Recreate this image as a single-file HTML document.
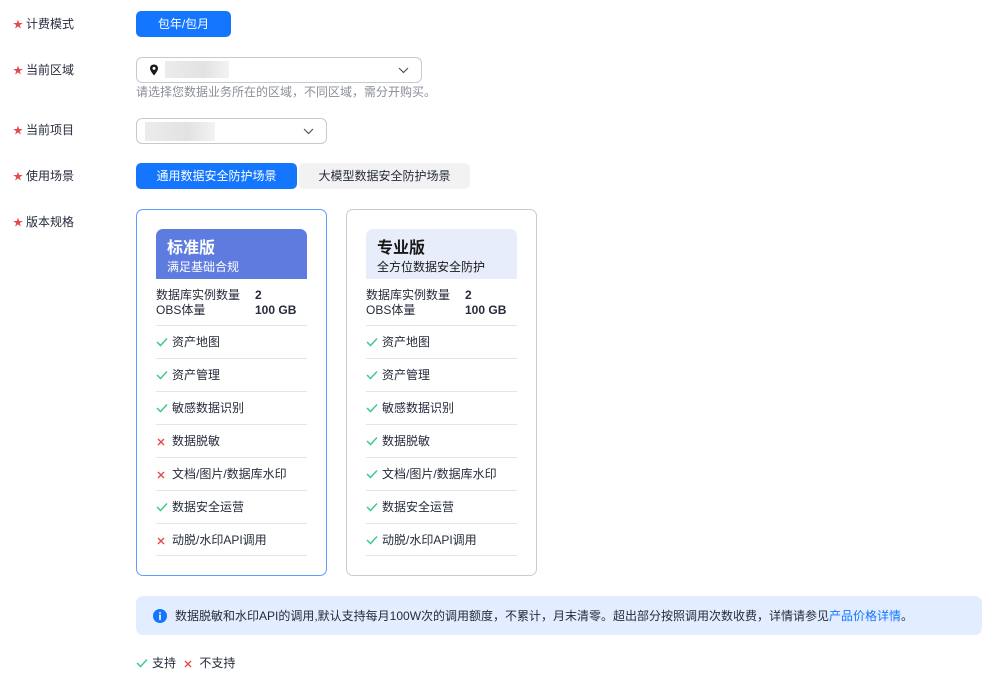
<!DOCTYPE html>
<html><head><meta charset="utf-8"><style>
*{box-sizing:border-box;margin:0;padding:0}
body{width:999px;height:673px;background:#fff;font-family:"Liberation Sans","Noto Sans CJK SC",sans-serif;font-size:12px;color:#252b3a;position:relative;overflow:hidden}
.a{position:absolute}
.lbl{left:13px;line-height:16px}
.lbl b{color:#e5484d;font-weight:normal;margin-right:3px;font-size:10px}
.btn{border-radius:5px;text-align:center;line-height:26px;height:26px}
.sel{border:1px solid #c7c9ce;border-radius:6px;height:26px;background:#fff}
.blur{background:linear-gradient(90deg,#ececec,#e2e2e2 60%,#f3f3f3);height:17px}
.card{border:1px solid #c9cbd0;border-radius:7px;width:191px;height:367px;top:209px}
.hd{left:19px;top:19px;width:151px;height:50px;border-radius:7px 7px 0 0;padding:10px 0 0 11px}
.hd .t{font-size:16px;font-weight:bold;line-height:20px}
.hd .s{font-size:12px;line-height:16px}
.spec{left:19px;top:78px;width:151px;line-height:15px}
.spec span{display:inline-block;width:99px}
.spec i{font-style:normal;font-weight:bold}
.row{left:19px;width:151px;height:33px;border-top:1px solid #e4e5e8;line-height:32px}
.row.last{border-bottom:1px solid #e4e5e8}
.ck{display:inline-block;width:16px;height:10px;vertical-align:-1px;background:no-repeat}
.ck svg,.x svg{display:block}
.x{display:inline-block;width:16px;vertical-align:-1px;padding-left:1px}
</style></head><body>
<svg width="0" height="0" style="position:absolute"><defs>
<symbol id="c" viewBox="0 0 12 10"><path d="M1 5l3.5 3.5L11 1.5" fill="none" stroke="#3dcc8e" stroke-width="1.5"/></symbol>
<symbol id="xx" viewBox="0 0 8 8"><path d="M1 1l6 6M7 1L1 7" stroke="#e5484d" stroke-width="1.4"/></symbol>
</defs></svg>
<div class="a lbl" style="top:16px"><b>★</b>计费模式</div>
<div class="a lbl" style="top:62px"><b>★</b>当前区域</div>
<div class="a lbl" style="top:122px"><b>★</b>当前项目</div>
<div class="a lbl" style="top:168px"><b>★</b>使用场景</div>
<div class="a lbl" style="top:214px"><b>★</b>版本规格</div>

<div class="a btn" style="left:136px;top:11px;width:95px;background:#1476ff;color:#fff">包年/包月</div>

<div class="a sel" style="left:136px;top:57px;width:286px">
 <svg class="a" style="left:12px;top:6px" width="10" height="13" viewBox="0 0 10 13"><path d="M5 0.5C2.5 0.5 1 2.3 1 4.4 1 7 5 11.5 5 11.5S9 7 9 4.4C9 2.3 7.5 0.5 5 0.5Z" fill="#191919"/><circle cx="5" cy="4.4" r="1.5" fill="#fff"/></svg>
 <div class="a blur" style="left:28px;top:3px;width:64px"></div>
 <svg class="a" style="left:261px;top:9px" width="11" height="7" viewBox="0 0 11 7"><path d="M1 1l4.5 4.5L10 1" fill="none" stroke="#555" stroke-width="1.2"/></svg>
</div>
<div class="a" style="left:136px;top:84px;color:#8a8e99;line-height:16px">请选择您数据业务所在的区域，不同区域，需分开购买。</div>

<div class="a sel" style="left:136px;top:118px;width:191px">
 <div class="a blur" style="left:8px;top:3px;width:70px;height:19px"></div>
 <svg class="a" style="left:166px;top:9px" width="11" height="7" viewBox="0 0 11 7"><path d="M1 1l4.5 4.5L10 1" fill="none" stroke="#555" stroke-width="1.2"/></svg>
</div>

<div class="a btn" style="left:136px;top:163px;width:161px;background:#1476ff;color:#fff">通用数据安全防护场景</div>
<div class="a btn" style="left:299px;top:163px;width:171px;background:#f2f2f3;color:#252b3a">大模型数据安全防护场景</div>

<div class="a card" style="left:136px;border-color:#5e9bff">
 <div class="a hd" style="background:#5e7ce0;color:#fff"><div class="t">标准版</div><div class="s">满足基础合规</div></div>
 <div class="a spec"><div><span>数据库实例数量</span><i>2</i></div><div><span>OBS体量</span><i>100 GB</i></div></div>
 <div class="a row" style="top:115px"><span class="ck"><svg width="12" height="10"><use href="#c"/></svg></span>资产地图</div>
 <div class="a row" style="top:148px"><span class="ck"><svg width="12" height="10"><use href="#c"/></svg></span>资产管理</div>
 <div class="a row" style="top:181px"><span class="ck"><svg width="12" height="10"><use href="#c"/></svg></span>敏感数据识别</div>
 <div class="a row" style="top:214px"><span class="x"><svg width="8" height="8"><use href="#xx"/></svg></span>数据脱敏</div>
 <div class="a row" style="top:247px"><span class="x"><svg width="8" height="8"><use href="#xx"/></svg></span>文档/图片/数据库水印</div>
 <div class="a row" style="top:280px"><span class="ck"><svg width="12" height="10"><use href="#c"/></svg></span>数据安全运营</div>
 <div class="a row last" style="top:313px"><span class="x"><svg width="8" height="8"><use href="#xx"/></svg></span>动脱/水印API调用</div>
</div>

<div class="a card" style="left:346px">
 <div class="a hd" style="background:#e8edfb;color:#191919"><div class="t">专业版</div><div class="s">全方位数据安全防护</div></div>
 <div class="a spec"><div><span>数据库实例数量</span><i>2</i></div><div><span>OBS体量</span><i>100 GB</i></div></div>
 <div class="a row" style="top:115px"><span class="ck"><svg width="12" height="10"><use href="#c"/></svg></span>资产地图</div>
 <div class="a row" style="top:148px"><span class="ck"><svg width="12" height="10"><use href="#c"/></svg></span>资产管理</div>
 <div class="a row" style="top:181px"><span class="ck"><svg width="12" height="10"><use href="#c"/></svg></span>敏感数据识别</div>
 <div class="a row" style="top:214px"><span class="ck"><svg width="12" height="10"><use href="#c"/></svg></span>数据脱敏</div>
 <div class="a row" style="top:247px"><span class="ck"><svg width="12" height="10"><use href="#c"/></svg></span>文档/图片/数据库水印</div>
 <div class="a row" style="top:280px"><span class="ck"><svg width="12" height="10"><use href="#c"/></svg></span>数据安全运营</div>
 <div class="a row last" style="top:313px"><span class="ck"><svg width="12" height="10"><use href="#c"/></svg></span>动脱/水印API调用</div>
</div>

<div class="a" style="left:136px;top:596px;width:846px;height:39px;background:#e2edff;border-radius:7px">
 <svg class="a" style="left:17px;top:13px" width="14" height="14" viewBox="0 0 14 14"><circle cx="7" cy="7" r="7" fill="#1476ff"/><rect x="6.2" y="3" width="1.6" height="1.6" fill="#fff"/><rect x="6.2" y="5.6" width="1.6" height="5.4" fill="#fff"/></svg>
 <div class="a" style="left:39px;top:12px;line-height:16px;white-space:nowrap">数据脱敏和水印API的调用,默认支持每月100W次的调用额度，不累计，月末清零。超出部分按照调用次数收费，详情请参见<span style="color:#1476ff">产品价格详情</span>。</div>
</div>

<div class="a" style="left:136px;top:655px;line-height:16px"><span class="ck"><svg width="12" height="10"><use href="#c"/></svg></span>支持 <span class="x" style="margin-left:4px"><svg width="8" height="8"><use href="#xx"/></svg></span>不支持</div>
</body></html>
